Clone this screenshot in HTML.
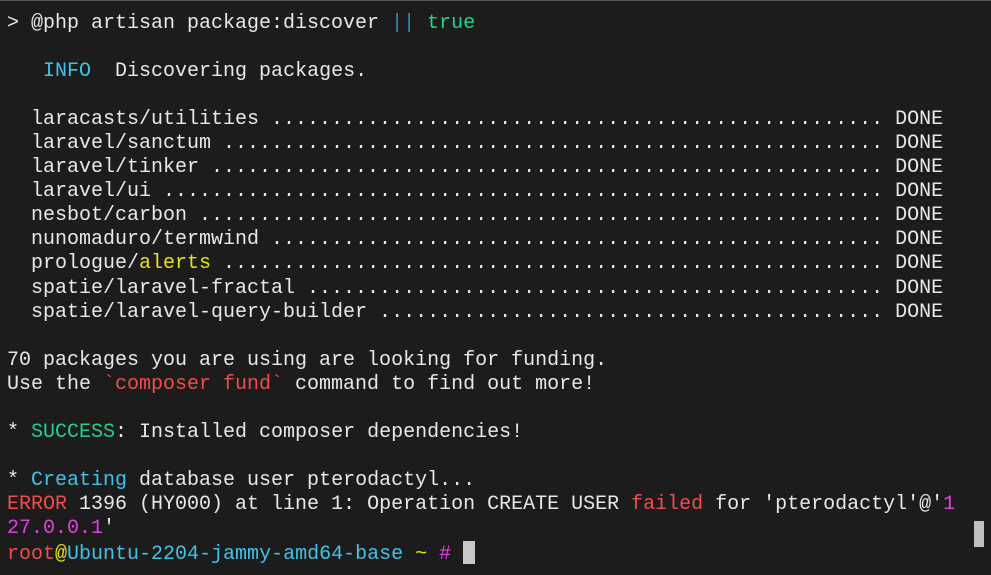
<!DOCTYPE html>
<html><head><meta charset="utf-8"><style>
html,body{margin:0;padding:0;background:#1c1c1c;width:991px;height:575px;overflow:hidden}
pre{margin:0;position:absolute;left:7px;top:12px;font-family:"Liberation Mono",monospace;font-size:20px;line-height:24.05px;color:#e8e8e8;white-space:pre}
.c{color:#3fc3e8}.g{color:#23d18b}.b{color:#2a8fc0}.y{color:#e5e510}.r{color:#f14c4c}.m{color:#e23fe2}
.cur{display:inline-block;width:12px;height:23px;background:#c8c8c8;vertical-align:-5px}
.sb{position:absolute;left:974px;top:521px;width:10px;height:26px;background:#c0c0c0}
.tl{position:absolute;left:0;top:0;width:991px;height:1px;background:#555}
</style></head><body><div class="tl"></div><pre>&gt; @php artisan package:discover <span class="b">||</span> <span class="g">true</span>

   <span class="c">INFO</span>  Discovering packages.

  laracasts/utilities ................................................... DONE
  laravel/sanctum ....................................................... DONE
  laravel/tinker ........................................................ DONE
  laravel/ui ............................................................ DONE
  nesbot/carbon ......................................................... DONE
  nunomaduro/termwind ................................................... DONE
  prologue/<span class="y">alerts</span> ....................................................... DONE
  spatie/laravel-fractal ................................................ DONE
  spatie/laravel-query-builder .......................................... DONE

70 packages you are using are looking for funding.
Use the <span class="r">`composer fund`</span> command to find out more!

* <span class="g">SUCCESS</span>: Installed composer dependencies!

* <span class="c">Creating</span> database user pterodactyl...
<span class="r">ERROR</span> 1396 (HY000) at line 1: Operation CREATE USER <span class="r">failed</span> for 'pterodactyl'@'<span class="m">1</span>
<span class="m">27.0.0.1</span>'
<span class="r">root</span><span class="y">@</span><span class="c">Ubuntu-2204-jammy-amd64-base</span> <span class="y">~</span> <span class="m">#</span> <span class="cur"></span></pre><div class="sb"></div></body></html>
